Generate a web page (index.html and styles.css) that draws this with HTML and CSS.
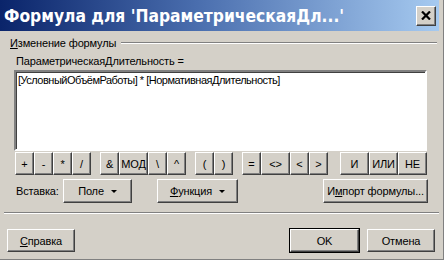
FILE: index.html
```html
<!DOCTYPE html>
<html lang="ru">
<head>
    <meta charset="UTF-8">
    <title>Формула</title>
    <link rel="stylesheet" href="styles.css">
</head>
<body>
    <div class="window">
        <div class="titlebar">
            <span class="title">Формула для 'ПараметрическаяДл...'</span>
            <button class="close-btn">
                <svg width="10" height="9" viewBox="0 0 10 9"><path d="M1 0.5 L9 8.5 M9 0.5 L1 8.5" stroke="#000" stroke-width="2.2"/></svg>
            </button>
        </div>
        <div class="content">
            <div class="group-head">
                <span><u>И</u>зменение формулы</span>
                <div class="etched"></div>
            </div>
            <div class="field-label">ПараметрическаяДлительность =</div>
            <div class="formula-box">[УсловныйОбъёмРаботы] * [НормативнаяДлительность]</div>
            <div class="ops">
                <div class="op-group">
                    <button class="btn op">+</button>
                    <button class="btn op">-</button>
                    <button class="btn op">*</button>
                    <button class="btn op">/</button>
                </div>
                <div class="op-group">
                    <button class="btn op">&amp;</button>
                    <button class="btn op wide">МОД</button>
                    <button class="btn op">\</button>
                    <button class="btn op">^</button>
                </div>
                <div class="op-group">
                    <button class="btn op">(</button>
                    <button class="btn op">)</button>
                </div>
                <div class="op-group">
                    <button class="btn op">=</button>
                    <button class="btn op wide">&lt;&gt;</button>
                    <button class="btn op">&lt;</button>
                    <button class="btn op">&gt;</button>
                </div>
                <div class="op-group logic">
                    <button class="btn op wide">И</button>
                    <button class="btn op wide">ИЛИ</button>
                    <button class="btn op wide">НЕ</button>
                </div>
            </div>
            <div class="insert-row">
                <span class="insert-label">Вставка:</span>
                <button class="btn drop field-btn"><span>Поле</span><i class="arrow"></i></button>
                <button class="btn drop func-btn"><span><u>Ф</u>ункция</span><i class="arrow"></i></button>
                <button class="btn import-btn">И<u>м</u>порт формулы...</button>
            </div>
        </div>
        <div class="separator"></div>
        <div class="footer">
            <button class="btn footer-btn"><u>С</u>правка</button>
            <div class="footer-right">
                <button class="btn footer-btn default">OK</button>
                <button class="btn footer-btn">Отмена</button>
            </div>
        </div>
    </div>
</body>
</html>
```

FILE: styles.css
```css
body {
    margin: 0;
    padding: 0;
    background-color: #d4d0c8;
    font-family: "Liberation Sans", Arial, sans-serif;
    font-size: 11px;
    letter-spacing: -0.15px;
    color: #000;
}
.window {
    width: 444px;
    height: 260px;
    background-color: #d4d0c8;
    box-sizing: border-box;
    border-right: 1px solid #808080;
    border-bottom: 1px solid #808080;
    overflow: hidden;
}
.titlebar {
    height: 31px;
    margin-right: 4px;
    display: flex;
    align-items: center;
    justify-content: space-between;
    background: linear-gradient(to right, #0a246a, #4a6eae 45%, #a6caf0);
    padding: 0 3px 0 4px;
}
.title {
    color: #fff;
    font-family: "DejaVu Sans Condensed", "DejaVu Sans", Verdana, sans-serif;
    font-weight: bold;
    font-size: 17.3px;
    letter-spacing: 0;
    margin-top: 1px;
}
.close-btn {
    width: 20px;
    height: 20px;
    padding: 0;
    display: flex;
    align-items: center;
    justify-content: center;
    background-color: #d4d0c8;
    border: 1px solid;
    border-color: #fff #404040 #404040 #fff;
    box-shadow: inset -1px -1px #808080;
}
.content {
    padding: 5px 14px 0 14px;
}
.group-head {
    display: flex;
    align-items: center;
    margin-left: -4px;
    margin-right: -8px;
    height: 13px;
}
.etched {
    flex: 1;
    margin-left: 5px;
    border-top: 1px solid #808080;
    border-bottom: 1px solid #fff;
}
.field-label {
    margin-top: 6px;
    padding-left: 2px;
    height: 13px;
}
.formula-box {
    margin-top: 2px;
    height: 81px;
    box-sizing: border-box;
    width: 413px;
    background-color: #fff;
    border: 2px solid;
    border-color: #808080 #fff #fff #808080;
    box-shadow: inset 1px 1px #404040;
    padding: 2px 2px;
    letter-spacing: -0.5px;
}
.ops {
    display: flex;
    gap: 9px;
    margin-top: 1px;
    padding-left: 1px;
}
.op-group {
    display: flex;
}
.op-group.logic {
    margin-left: 3px;
}
.btn {
    font-family: "Liberation Sans", Arial, sans-serif;
    font-size: 11px;
    letter-spacing: -0.15px;
    color: #000;
    background-color: #d4d0c8;
    border: 1px solid;
    border-color: #fff #404040 #404040 #fff;
    box-shadow: inset -1px -1px #808080;
    padding: 0;
    box-sizing: border-box;
}
.op {
    width: 19px;
    height: 23px;
}
.op.wide {
    width: 29px;
}
.insert-row {
    display: flex;
    align-items: center;
    margin-top: 4px;
    height: 24px;
}
.insert-label {
    width: 47px;
    padding-left: 2px;
}
.drop {
    height: 24px;
    display: flex;
    align-items: center;
    justify-content: center;
    gap: 7px;
}
.field-btn {
    width: 69px;
}
.func-btn {
    width: 81px;
    margin-left: 25px;
}
.import-btn {
    height: 24px;
    width: 105px;
    margin-left: auto;
    margin-right: 1px;
}
.arrow {
    width: 0;
    height: 0;
    margin-top: 1px;
    border-left: 3px solid transparent;
    border-right: 3px solid transparent;
    border-top: 3px solid #000;
}
.separator {
    margin: 9px 4px 0 4px;
    border-top: 1px solid #808080;
    border-bottom: 1px solid #fff;
}
.footer {
    display: flex;
    justify-content: space-between;
    padding: 15px 8px 0 7px;
}
.footer-right {
    display: flex;
    gap: 8px;
}
.footer-btn {
    width: 68px;
    height: 23px;
}
.footer-btn.default {
    outline: 1px solid #000;
    outline-offset: 0;
    width: 69px;
}
```
